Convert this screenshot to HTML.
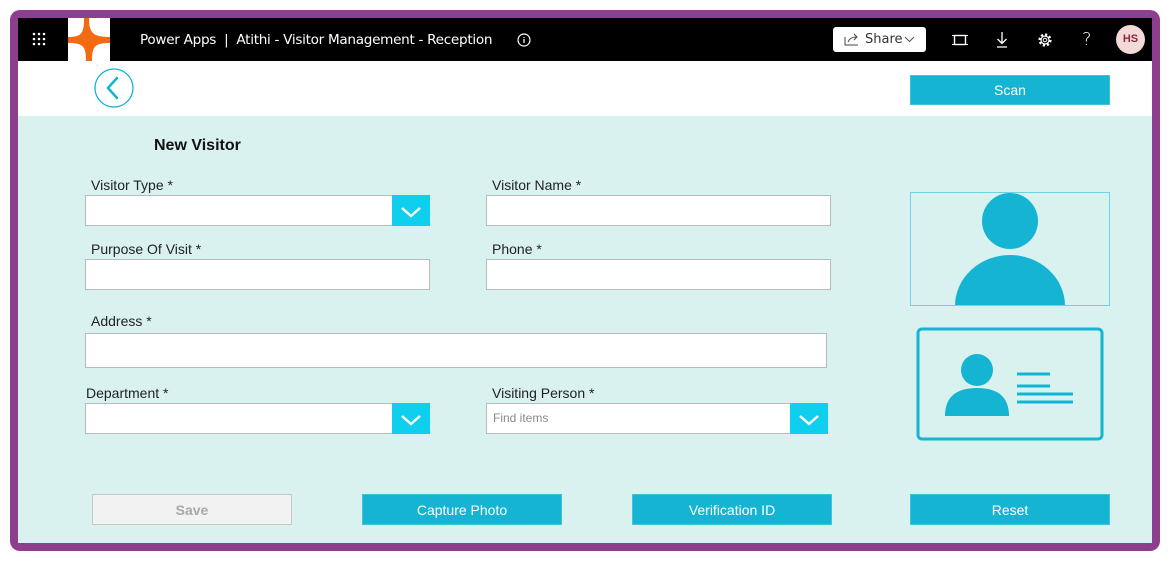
<!DOCTYPE html>
<html><head><meta charset="utf-8"><style>
*{box-sizing:border-box;margin:0;padding:0}
body{width:1170px;height:561px;background:#fff;position:relative;overflow:hidden;font-family:"Liberation Sans",Arial,sans-serif}
.frame{position:absolute;left:10px;top:10px;width:1150px;height:541px;background:#8E3E8E;border-radius:10px}
.inner{position:absolute;left:18px;top:18px;width:1134px;height:525px;background:#D9F2EF;overflow:hidden}
.hdr{position:absolute;left:0;top:0;width:1134px;height:43px;background:#000}
.white{position:absolute;left:0;top:43px;width:1134px;height:55px;background:#fff}
.a{position:absolute}
.lbl{position:absolute;font-size:14px;color:#222}
.inp{position:absolute;background:#fff;border:1px solid #b8bcbc;height:31px}
.dd{position:absolute;right:-1px;top:-1px;width:38px;height:31px;background:#0ECFEE}
.btn{position:absolute;background:#14B4D2;color:#fff;font-size:14px;text-align:center;line-height:30px;height:31px;width:200px;border:1px solid #3ec3dc}
</style></head><body>
<div class="frame"></div>
<div class="inner">
 <div class="hdr">
  <svg class="a" style="left:14px;top:14px" width="14" height="14"><g fill="#fff"><circle cx="2" cy="2" r="1.3"/><circle cx="7" cy="2" r="1.3"/><circle cx="12" cy="2" r="1.3"/><circle cx="2" cy="7" r="1.3"/><circle cx="7" cy="7" r="1.3"/><circle cx="12" cy="7" r="1.3"/><circle cx="2" cy="12" r="1.3"/><circle cx="7" cy="12" r="1.3"/><circle cx="12" cy="12" r="1.3"/></g></svg>
  <svg class="a" style="left:50px;top:0" width="42" height="43"><rect width="42" height="43" fill="#fff"/><path d="M16 0 L21 0 C21 15 25 19 42 19 L42 25 C27 25 24 28 24 43 L18 43 C18 28 15 25 0 25 L0 19 C14 19 16 15 16 0Z" fill="#F26A12"/></svg>
  <div class="a" style="left:122px;top:14px;color:#fff;font-size:13.6px;font-family:'DejaVu Sans',sans-serif;letter-spacing:-0.3px">Power Apps &nbsp;|&nbsp; Atithi - Visitor Management - Reception</div>
  <svg class="a" style="left:499px;top:15px" width="14" height="14"><circle cx="7" cy="7" r="6" fill="none" stroke="#fff" stroke-width="1.2"/><path d="M7 6v4M7 4v1" stroke="#fff" stroke-width="1.3"/></svg>
  <div class="a" style="left:815px;top:9px;width:93px;height:25px;background:#fff;border-radius:3px;font-size:13px;color:#333;line-height:25px;padding-left:32px;font-family:'DejaVu Sans',sans-serif">Share</div>
  <svg class="a" style="left:826px;top:14px" width="16" height="14"><path d="M1 5v8h13" fill="none" stroke="#444"/><path d="M4 10 Q6 5 12 5 M10 2l3 3-3 3" fill="none" stroke="#444"/></svg>
  <svg class="a" style="left:886px;top:18px" width="11" height="7"><path d="M1 1l4.5 4.5L10 1" fill="none" stroke="#555"/></svg>
  <svg class="a" style="left:934px;top:15px" width="16" height="14"><rect x="2.5" y="2.5" width="11" height="9" fill="none" stroke="#fff" stroke-width="1.4"/><path d="M0 2.5h3M13 2.5h3M0 11.5h3M13 11.5h3" stroke="#fff"/></svg>
  <svg class="a" style="left:978px;top:13px" width="12" height="17"><path d="M6 1v11M1.5 8l4.5 4.5L10.5 8M1 16h10" fill="none" stroke="#fff" stroke-width="1.3"/></svg>
  <svg class="a" style="left:1019px;top:14px" width="16" height="16"><circle cx="8" cy="8" r="5.5" fill="none" stroke="#fff" stroke-width="2.2" stroke-dasharray="2.2 2.1"/><circle cx="8" cy="8" r="4" fill="none" stroke="#fff" stroke-width="1.2"/><circle cx="8" cy="8" r="1.8" fill="none" stroke="#fff"/></svg>
  <div class="a" style="left:1064px;top:11px;color:#fff;font-size:18px;font-family:'DejaVu Sans',sans-serif;font-weight:200">?</div>
  <div class="a" style="left:1098px;top:7px;width:29px;height:29px;border-radius:50%;background:#F4D9D9;color:#8a2a3a;font-size:11px;font-weight:bold;text-align:center;line-height:29px">HS</div>
 </div>
 <div class="white">
  <svg class="a" style="left:76px;top:7px" width="40" height="40"><circle cx="20" cy="20" r="19" fill="#fff" stroke="#14B4D2" stroke-width="1.3"/><path d="M23 10L14 20l9 10" fill="none" stroke="#14B4D2" stroke-width="2.5" stroke-linecap="round"/></svg>
  <div class="btn" style="left:892px;top:14px;line-height:29px;height:30px">Scan</div>
 </div>
 <div class="a" style="left:136px;top:119px;font-size:16px;font-weight:bold;color:#111">New Visitor</div>

 <div class="lbl" style="left:73px;top:159px">Visitor Type *</div>
 <div class="inp" style="left:67px;top:177px;width:345px"><div class="dd"><svg width="38" height="31"><path d="M10 13l9 8 9-8" fill="none" stroke="#fff" stroke-width="2.5"/></svg></div></div>
 <div class="lbl" style="left:474px;top:159px">Visitor Name *</div>
 <div class="inp" style="left:468px;top:177px;width:345px"></div>

 <div class="lbl" style="left:73px;top:223px">Purpose Of Visit *</div>
 <div class="inp" style="left:67px;top:241px;width:345px"></div>
 <div class="lbl" style="left:474px;top:223px">Phone *</div>
 <div class="inp" style="left:468px;top:241px;width:345px"></div>

 <div class="lbl" style="left:73px;top:295px">Address *</div>
 <div class="inp" style="left:67px;top:315px;width:742px;height:35px"></div>

 <div class="lbl" style="left:68px;top:367px">Department *</div>
 <div class="inp" style="left:67px;top:385px;width:345px"><div class="dd"><svg width="38" height="31"><path d="M10 13l9 8 9-8" fill="none" stroke="#fff" stroke-width="2.5"/></svg></div></div>
 <div class="lbl" style="left:474px;top:367px">Visiting Person *</div>
 <div class="inp" style="left:468px;top:385px;width:342px;font-size:12px;color:#888;padding-left:6px;line-height:28px">Find items<div class="dd"><svg width="38" height="31"><path d="M10 13l9 8 9-8" fill="none" stroke="#fff" stroke-width="2.5"/></svg></div></div>

 <div class="a" style="left:892px;top:174px;width:200px;height:114px;border:1px solid #6fd3e5;overflow:hidden">
  <svg width="198" height="112"><circle cx="99" cy="28" r="28" fill="#14B4D2"/><path d="M44 113 A55 51 0 0 1 154 113Z" fill="#14B4D2"/></svg>
 </div>
 <svg class="a" style="left:898px;top:309px" width="188" height="115"><rect x="2" y="2" width="184" height="110" rx="4" fill="none" stroke="#14B4D2" stroke-width="3"/><circle cx="61" cy="43" r="16" fill="#14B4D2"/><path d="M29 89 Q29 61 61 61 Q93 61 93 89Z" fill="#14B4D2"/><path d="M101 47h33M101 59h33M101 67h56M101 75h56" stroke="#14B4D2" stroke-width="3"/></svg>

 <div class="btn" style="left:74px;top:476px;background:#F2F2F2;color:#a8a8a8;font-weight:bold;border:1px solid #c8c8c8">Save</div>
 <div class="btn" style="left:344px;top:476px">Capture Photo</div>
 <div class="btn" style="left:614px;top:476px">Verification ID</div>
 <div class="btn" style="left:892px;top:476px">Reset</div>
</div>
</body></html>
